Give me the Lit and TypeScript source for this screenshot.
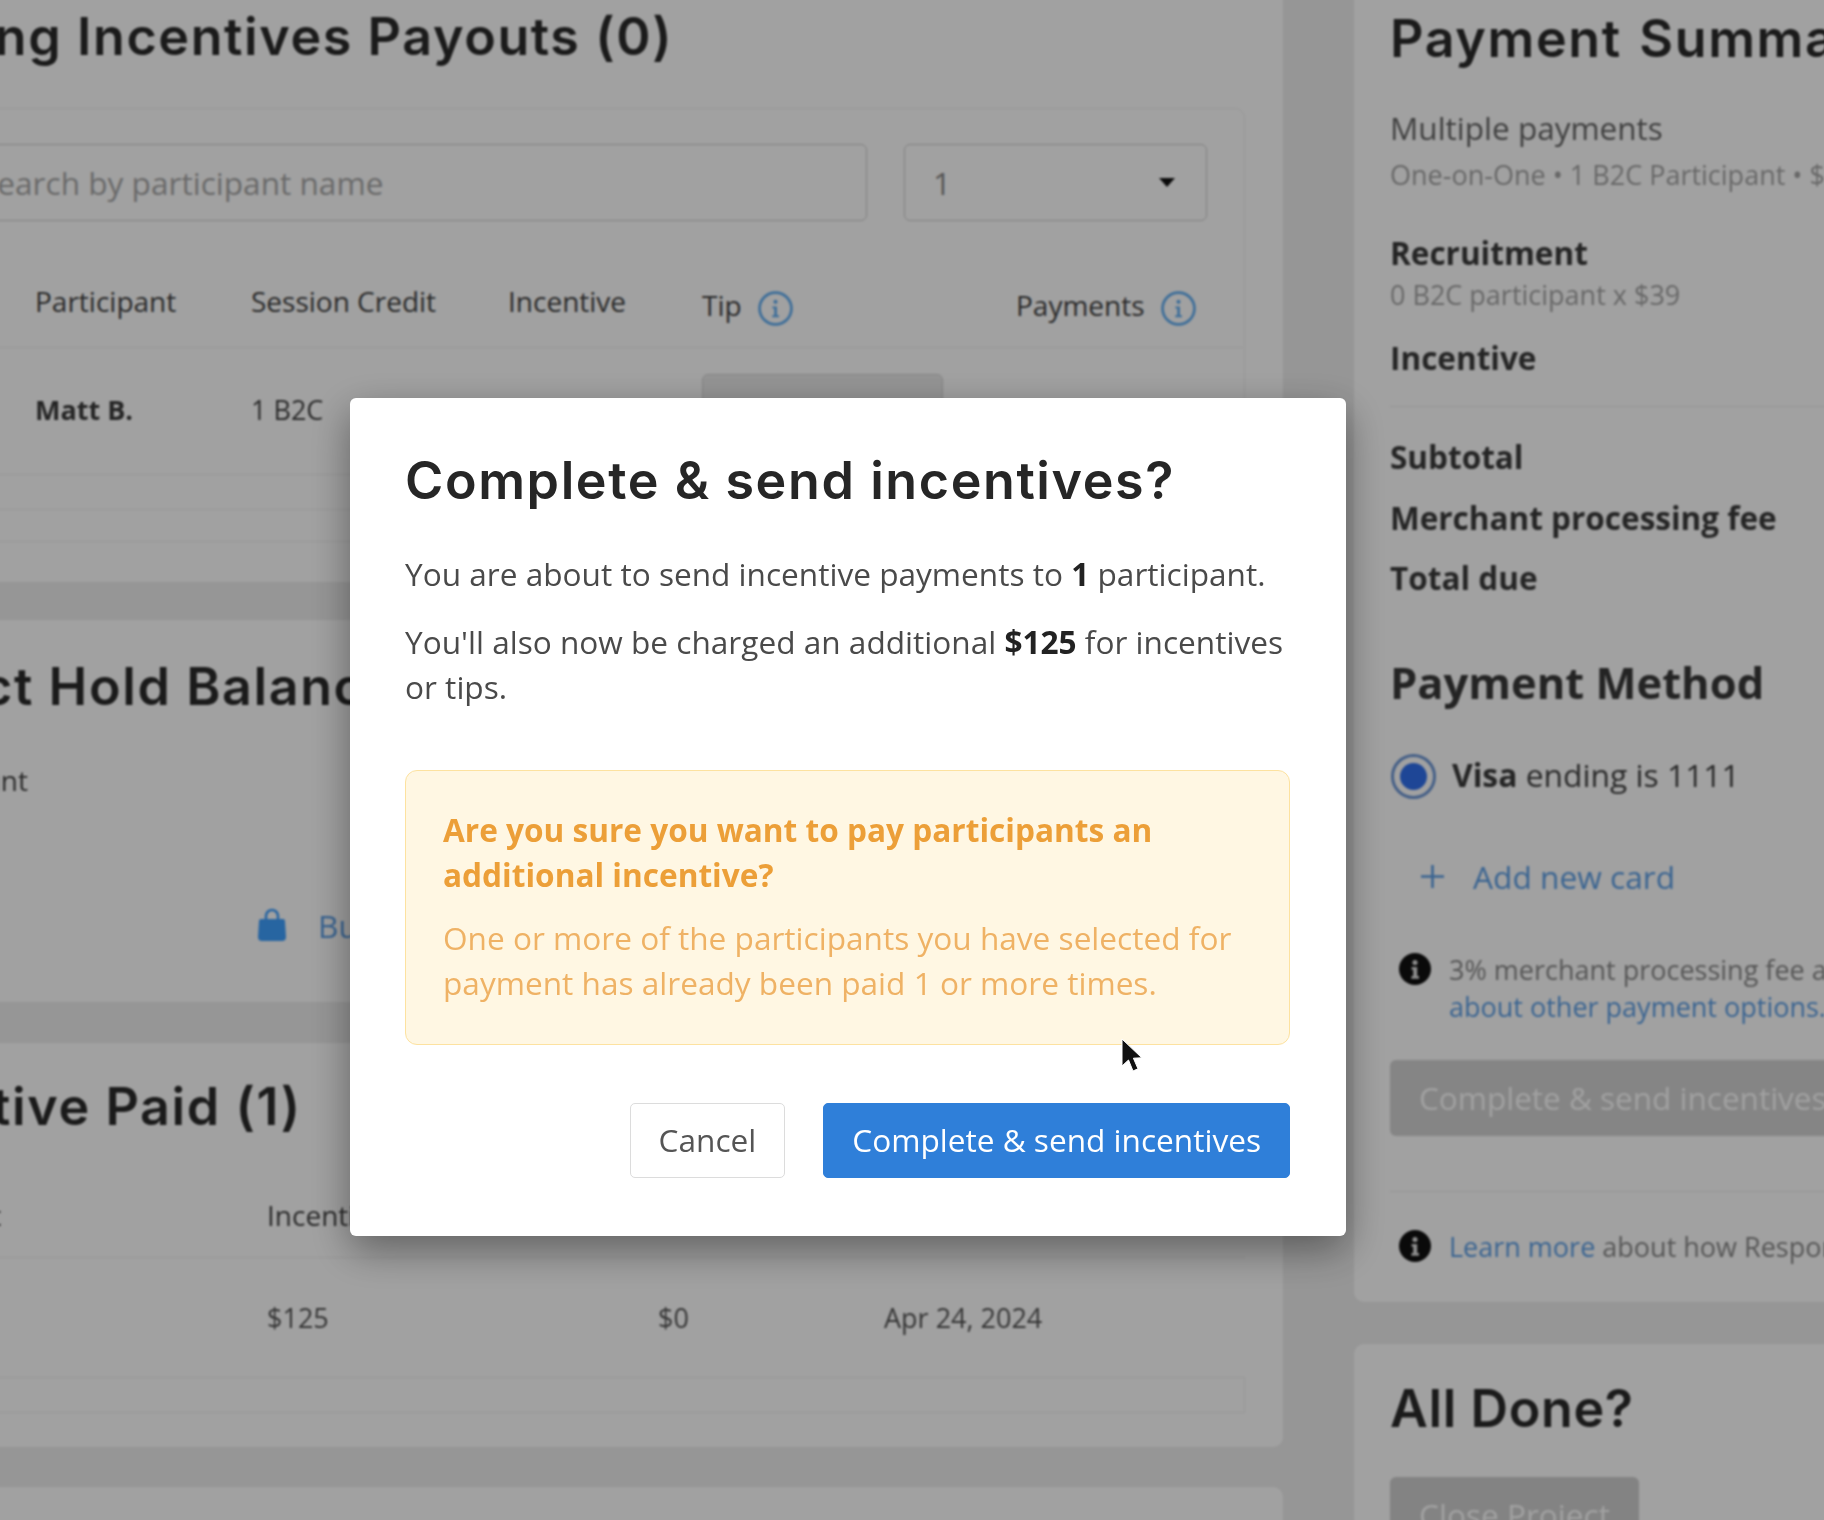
import { LitElement, html, css, svg } from "lit";
import { customElement } from "lit/decorators.js";

const infoOutline = html`<svg class="info" viewBox="0 0 36 36" aria-hidden="true">
  <circle cx="18" cy="18" r="15.5" fill="none" stroke="#62aef2" stroke-width="2.6"></circle>
  <circle cx="18" cy="11.5" r="2" fill="#62aef2"></circle>
  <path d="M15 16h4.4v8.6h2v1.9h-6.6v-1.9h2v-6.7h-1.8z" fill="#62aef2"></path>
</svg>`;

const infoSolid = html`<svg class="note-icon" viewBox="0 0 32 32" aria-hidden="true">
  <circle cx="16" cy="16" r="16" fill="#111"></circle>
  <circle cx="16" cy="9.5" r="2.6" fill="#ddd"></circle>
  <path d="M12.6 14h5.6v9h1.8v2.8h-7.6V23h1.8v-6.2h-1.6z" fill="#ddd"></path>
</svg>`;

const bag = svg`<path d="M8 11V8a6 6 0 0 1 12 0v3" fill="none" stroke="#3fa0ff" stroke-width="2.6"></path>
  <path d="M3 11h22a2 2 0 0 1 2 2l1 16a4 4 0 0 1-4 4H4a4 4 0 0 1-4-4l1-16a2 2 0 0 1 2-2z" fill="#3fa0ff"></path>`;

@customElement("app-root")
export class AppRoot extends LitElement {
  static styles = css`
    :host {
      display: block;
      position: relative;
      width: 1824px;
      height: 1520px;
      overflow: hidden;
      background: #eeeeee;
      font-family: "Open Sans", "Liberation Sans", sans-serif;
      font-size: 28px;
      color: #444;
    }
    .page {
      display: flex;
      gap: 71px;
      margin-left: -190px;
      margin-top: -60px;
      filter: blur(0.9px);
    }
    .left {
      flex: 0 0 1473px;
    }
    .right {
      flex: 0 0 700px;
    }
    .card {
      background: #fff;
      border-radius: 10px;
      padding: 0 38px 0 35px;
      white-space: nowrap;
    }
    h2 {
      margin: 0;
      font-family: Inter, "Liberation Sans", sans-serif;
      font-weight: 600;
      font-size: 52px;
      line-height: 70px;
      color: #2b2b2b;
      letter-spacing: 1.6px;
    }
    .pending {
      padding-top: 62px;
      padding-bottom: 40px;
      margin-bottom: 38px;
    }
    .panel {
      border: 1px solid #f1f1f1;
      border-radius: 10px;
      margin: 36px 0 0 65px;
      padding: 35px 37px 0 36px;
      height: 434px;
      box-sizing: border-box;
    }
    .filters {
      display: flex;
      gap: 37px;
      height: 77px;
    }
    .field {
      border: 1.5px solid #cfcfcf;
      border-radius: 6px;
      box-sizing: border-box;
      display: flex;
      align-items: center;
      color: #a8a8a8;
      padding: 0 32px;
      font-size: 31.6px;
    }
    .search {
      flex: 1;
    }
    .select {
      flex: 0 0 303px;
      justify-content: space-between;
      color: #888;
      padding-left: 28px;
    }
    .caret {
      width: 0;
      height: 0;
      border: 8px solid transparent;
      border-top: 9px solid #111;
      border-bottom: 0;
      margin-right: -1px;
    }
    .t-row {
      display: grid;
      grid-template-columns: 89px 216px 257px 193px 314px 1fr;
      align-items: center;
      border-bottom: 1px solid #f0f0f0;
      margin: 0 -36px;
      padding: 0 0 0 36px;
    }
    .t-head {
      height: 80px;
      margin-top: 46px;
    }
    .t-head > span {
      padding-bottom: 12px;
      margin-left: -1px;
    }
    .with-info {
      display: flex;
      align-items: center;
      gap: 15px;
    }
    .with-info span {
      padding-bottom: 4px;
    }
    .info {
      width: 37px;
      height: 37px;
      flex: none;
      margin-top: 2px;
    }
    .t-body {
      height: 126px;
      font-size: 27px;
    }
    .cell {
      padding-bottom: 4px;
      margin-left: -1px;
    }
    .blank {
      height: 34px;
    }
    .name {
      font-weight: 700;
      color: #3c3c3c;
    }
    .tip-input {
      width: 241px;
      height: 75px;
      background: #ebebeb;
      border: 1.5px solid #d5d5d5;
      border-radius: 6px;
      box-sizing: border-box;
    }
    .hold {
      padding-top: 32px;
      height: 382px;
      box-sizing: border-box;
      margin-bottom: 41px;
    }
    .hold-label {
      width: 183px;
      margin-top: 38px;
      height: 40px;
      line-height: 40px;
      text-align: right;
    }
    .buy {
      display: flex;
      align-items: center;
      gap: 32px;
      margin: 105px 0 0 413px;
      height: 40px;
      color: #5d9fe6;
      font-size: 31.6px;
    }
    .buy svg {
      width: 28px;
      height: 34px;
      flex: none;
    }
    .paid {
      padding-top: 29px;
      height: 404px;
      box-sizing: border-box;
      margin-bottom: 40px;
    }
    .paid-row {
      display: grid;
      grid-template-columns: 422px 391px 226px 1fr;
      border-bottom: 1px solid #f0f0f0;
      margin-left: -35px;
      padding-left: 35px;
    }
    .paid-head {
      height: 62px;
      margin-top: 53px;
      line-height: 40px;
    }
    .paid-head span:first-child {
      margin-left: 15px;
    }
    .paid-body {
      height: 119px;
      align-items: center;
      color: #555;
      font-size: 27px;
    }
    .paid-blank {
      height: 34px;
      border-right: 1px solid #f0f0f0;
    }
    .stub {
      height: 200px;
    }
    .summary {
      padding: 64px 0 36px 36px;
      margin-bottom: 42px;
      font-size: 31.5px;
    }
    .summary h2 {
      word-spacing: 3px;
    }
    .line {
      height: 40px;
      line-height: 40px;
    }
    .muted {
      color: #a5a5a5;
      font-size: 27px;
    }
    .strong {
      font-weight: 700;
      color: #3c3c3c;
    }
    .m-multi {
      margin-top: 34px;
      color: #666;
    }
    .m-one {
      margin-top: 7px;
    }
    .m-rec {
      margin-top: 38px;
    }
    .m-b2c {
      margin-top: 2px;
    }
    .m-inc {
      margin-top: 23px;
    }
    hr {
      border: 0;
      border-top: 1px solid #ececec;
      margin: 0;
    }
    .rule-a {
      margin-top: 28px;
    }
    .m-sub {
      margin-top: 30px;
    }
    .m-fee,
    .m-due {
      margin-top: 20.5px;
    }
    h3 {
      margin: 60px 0 0;
      font-size: 43.5px;
      line-height: 50px;
      font-weight: 700;
      color: #3a3a3a;
    }
    .visa {
      display: flex;
      align-items: center;
      gap: 16px;
      height: 44px;
      margin-top: 46px;
      font-size: 31.8px;
    }
    .visa-text {
      padding-bottom: 4px;
    }
    .radio {
      width: 45px;
      height: 45px;
      flex: none;
      box-sizing: border-box;
      border: 3px solid #6f98d6;
      border-radius: 50%;
      padding: 6px;
      margin-left: 1px;
      background: #fff;
    }
    .radio::after {
      content: "";
      display: block;
      width: 100%;
      height: 100%;
      border-radius: 50%;
      background: #3070ee;
    }
    .add {
      display: flex;
      align-items: center;
      gap: 28px;
      height: 40px;
      margin: 58px 0 0 30px;
      color: #5d9fe6;
      font-size: 31.7px;
    }
    .plus {
      width: 25px;
      height: 25px;
      flex: none;
    }
    .note {
      display: flex;
      gap: 18px;
      line-height: 37px;
      margin: 55px 0 0 9px;
      color: #8a8a8a;
      font-size: 27px;
    }
    .note-icon {
      width: 32px;
      height: 32px;
      flex: none;
      margin-top: 2px;
    }
    a {
      color: #5d9fe6;
      text-decoration: none;
    }
    .disabled-btn {
      background: #d3d3d3;
      color: #ffffff;
      border-radius: 6px;
      height: 76px;
      line-height: 76px;
      padding-left: 29px;
      margin-top: 35px;
    }
    .rule-b {
      margin-top: 55px;
    }
    .learn {
      margin-top: 34px;
      align-items: center;
      height: 40px;
    }
    .learn .note-icon {
      margin-top: 0;
    }
    .done {
      padding: 30px 0 40px 36px;
      font-size: 31.6px;
    }
    .done h2 {
      letter-spacing: 0.6px;
    }
    .close-btn {
      background: #d0d0d0;
      color: #ffffff;
      border-radius: 6px;
      width: 249px;
      height: 75px;
      line-height: 75px;
      text-align: center;
      margin-top: 33px;
    }
    .overlay {
      position: absolute;
      inset: 0;
      background: rgba(0, 0, 0, 0.37);
    }
    .modal {
      position: absolute;
      left: 350px;
      top: 398px;
      width: 996px;
      box-sizing: border-box;
      padding: 48px 56px 58px 55px;
      background: #fff;
      border-radius: 6px;
      box-shadow: 0 14px 40px rgba(0, 0, 0, 0.4);
      filter: blur(0.5px);
      color: #4a4a4a;
      font-size: 31.6px;
      line-height: 45px;
    }
    .modal h2 {
      color: #262626;
    }
    .modal p {
      margin: 0;
    }
    .modal .p1 {
      margin-top: 35px;
    }
    .modal .p2 {
      margin-top: 23px;
    }
    .modal b {
      color: #222;
    }
    .warn {
      margin-top: 61px;
      height: 275px;
      box-sizing: border-box;
      padding: 36px 30px 0 37px;
      background: #fff7e3;
      border: 1.5px solid #fde2a0;
      border-radius: 12px;
      color: #efb265;
    }
    .warn strong {
      display: block;
      color: #ec9f38;
      font-weight: 700;
      margin-bottom: 18px;
    }
    .actions {
      display: flex;
      justify-content: flex-end;
      gap: 38px;
      margin-top: 58px;
    }
    .btn {
      height: 75px;
      line-height: 71px;
      box-sizing: border-box;
      border-radius: 5px;
      padding: 0 28px;
      border: 1px solid #dcdcdc;
      color: #555;
      background: #fff;
    }
    .btn.primary {
      background: #2f7fd9;
      border-color: #2f7fd9;
      color: #fff;
    }
    .cursor {
      position: absolute;
      left: 1118px;
      top: 1036px;
      width: 26px;
      height: 42px;
    }
  `;

  render() {
    return html`
      <div class="page">
        <div class="left">
          <section class="card pending">
            <h2>Pending Incentives Payouts (0)</h2>
            <div class="panel">
              <div class="filters">
                <div class="field search">Search by participant name</div>
                <div class="field select">1<i class="caret"></i></div>
              </div>
              <div class="t-row t-head">
                <i></i>
                <span>Participant</span>
                <span>Session Credit</span>
                <span>Incentive</span>
                <div class="with-info"><span>Tip</span>${infoOutline}</div>
                <div class="with-info"><span>Payments</span>${infoOutline}</div>
              </div>
              <div class="t-row t-body">
                <i></i>
                <div class="name cell">Matt B.</div>
                <div class="cell">1 B2C</div>
                <div></div>
                <div class="tip-input"></div>
                <div></div>
              </div>
              <div class="t-row blank"></div>
            </div>
          </section>

          <section class="card hold">
            <h2>Project Hold Balance</h2>
            <div class="hold-label">Hold amount</div>
            <div class="buy">
              <svg viewBox="0 0 28 34" aria-hidden="true">${bag}</svg>
              <a>Buy more credits</a>
            </div>
          </section>

          <section class="card paid">
            <h2>Incentive Paid (1)</h2>
            <div class="paid-row paid-head">
              <span>Participant</span>
              <span>Incentive</span>
              <span>Tip</span>
              <span>Date Paid</span>
            </div>
            <div class="paid-row paid-body">
              <span>Matt B.</span>
              <span>$125</span>
              <span>$0</span>
              <span>Apr 24, 2024</span>
            </div>
            <div class="paid-row paid-blank"></div>
          </section>

          <section class="card stub"></section>
        </div>

        <div class="right">
          <section class="card summary">
            <h2>Payment Summary</h2>
            <div class="line m-multi">Multiple payments</div>
            <div class="line muted m-one">One-on-One • 1 B2C Participant • $39 per session</div>
            <div class="line strong m-rec">Recruitment</div>
            <div class="line muted m-b2c">0 B2C participant x $39</div>
            <div class="line strong m-inc">Incentive</div>
            <hr class="rule-a" />
            <div class="line strong m-sub">Subtotal</div>
            <div class="line strong m-fee">Merchant processing fee</div>
            <div class="line strong m-due">Total due</div>
            <h3>Payment Method</h3>
            <div class="visa">
              <div class="radio"></div>
              <div class="visa-text"><span class="strong">Visa</span> ending is 1111</div>
            </div>
            <div class="add">
              <svg class="plus" viewBox="0 0 25 25" aria-hidden="true">
                <path d="M12.5 1v23M1 12.5h23" stroke="#5d9fe6" stroke-width="2.6" fill="none"></path>
              </svg>
              <a>Add new card</a>
            </div>
            <div class="note">
              ${infoSolid}
              <div>
                3% merchant processing fee applies. Learn more<br />
                <a>about other payment options.</a>
              </div>
            </div>
            <div class="disabled-btn">Complete &amp; send incentives</div>
            <hr class="rule-b" />
            <div class="note learn">
              ${infoSolid}
              <div><a>Learn more</a> about how Respondent payments work</div>
            </div>
          </section>

          <section class="card done">
            <h2>All Done?</h2>
            <div class="close-btn">Close Project</div>
          </section>
        </div>
      </div>

      <div class="overlay"></div>

      <div class="modal">
        <h2>Complete &amp; send incentives?</h2>
        <p class="p1">You are about to send incentive payments to <b>1</b> participant.</p>
        <p class="p2">You'll also now be charged an additional <b>$125</b> for incentives or tips.</p>
        <div class="warn">
          <strong>Are you sure you want to pay participants an additional incentive?</strong>
          One or more of the participants you have selected for payment has already been paid 1 or more times.
        </div>
        <div class="actions">
          <div class="btn">Cancel</div>
          <div class="btn primary">Complete &amp; send incentives</div>
        </div>
      </div>

      <svg class="cursor" viewBox="0 0 26 42" aria-hidden="true">
        <path d="M4 3v27l6.5-6 4.5 11 5-2.2-4.6-10.6 8.4-.4z" fill="#111" stroke="#fff" stroke-width="1"></path>
      </svg>
    `;
  }
}
